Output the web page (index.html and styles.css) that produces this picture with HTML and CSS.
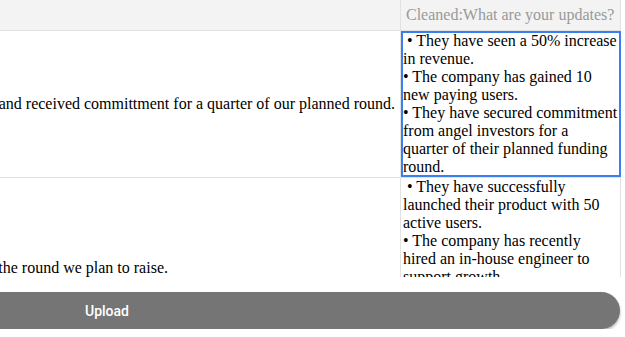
FILE: index.html
```html
<!DOCTYPE html>
<html lang="en">
  <head>
    <meta charset="UTF-8" />
    <title>Updates</title>
    <link rel="stylesheet" href="styles.css">
  </head>
  <body>
    <div class="sheet">
      <div class="row head">
        <div class="cell left"></div>
        <div class="cell right head-title">Cleaned:What are your updates?</div>
      </div>
      <div class="row row-one">
        <div class="cell left"><span>We grew revenue this month and received committment for a quarter of our planned round.</span></div>
        <div class="cell right text selected"> • They have seen a 50% increase
in revenue.
• The company has gained 10
new paying users.
• They have secured commitment
from angel investors for a
quarter of their planned funding
round.</div>
      </div>
      <div class="row row-two">
        <div class="cell left short"><span>We launched with 50 active users and hired an engineer ahead of the round we plan to raise.</span></div>
        <div class="cell right text"> • They have successfully
launched their product with 50
active users.
• The company has recently
hired an in-house engineer to
support growth.</div>
      </div>
    </div>

    <button class="upload">Upload</button>
  </body>
</html>
```

FILE: styles.css
```css
body {
  margin: 0;
  padding: 0;
  background: #fff;
  font-family: "Liberation Serif", "Times New Roman", serif;
  font-size: 16px;
  color: #000;
}
.sheet {
  width: 621px;
  height: 277px;
  overflow: hidden;
}
.row {
  display: flex;
  border-bottom: 1px solid #e2e2e2;
}
.head {
  height: 30px;
  background: #f3f3f3;
}
.row-one {
  height: 146px;
}
.row-two {
  height: 180px;
}
.cell {
  box-sizing: border-box;
  border-right: 1px solid #e2e2e2;
  overflow: hidden;
}
.left {
  width: 401px;
  display: flex;
  align-items: center;
  justify-content: flex-end;
  white-space: nowrap;
  padding-right: 5px;
}
.left.short {
  padding-right: 232px;
}
.right {
  width: 220px;
}
.head-title {
  display: flex;
  align-items: center;
  padding-left: 5px;
  color: #999;
  white-space: nowrap;
}
.text {
  padding: 1px 0 0 2px;
  line-height: 18px;
  white-space: pre-wrap;
}
.row-two .text {
  padding-top: 0;
}
.selected {
  outline: 2px solid #3b7ef0;
  outline-offset: -2px;
}
.upload {
  display: block;
  width: 620px;
  height: 37px;
  margin-top: 15px;
  padding: 0 0 0 85px;
  border: none;
  border-radius: 0 19px 19px 0;
  background: #757575;
  box-shadow: 0 2px 3px rgba(0, 0, 0, 0.3);
  color: #fff;
  font-family: Roboto, "Liberation Sans", sans-serif;
  font-size: 14px;
  font-weight: 500;
  text-align: left;
  cursor: pointer;
}
```
